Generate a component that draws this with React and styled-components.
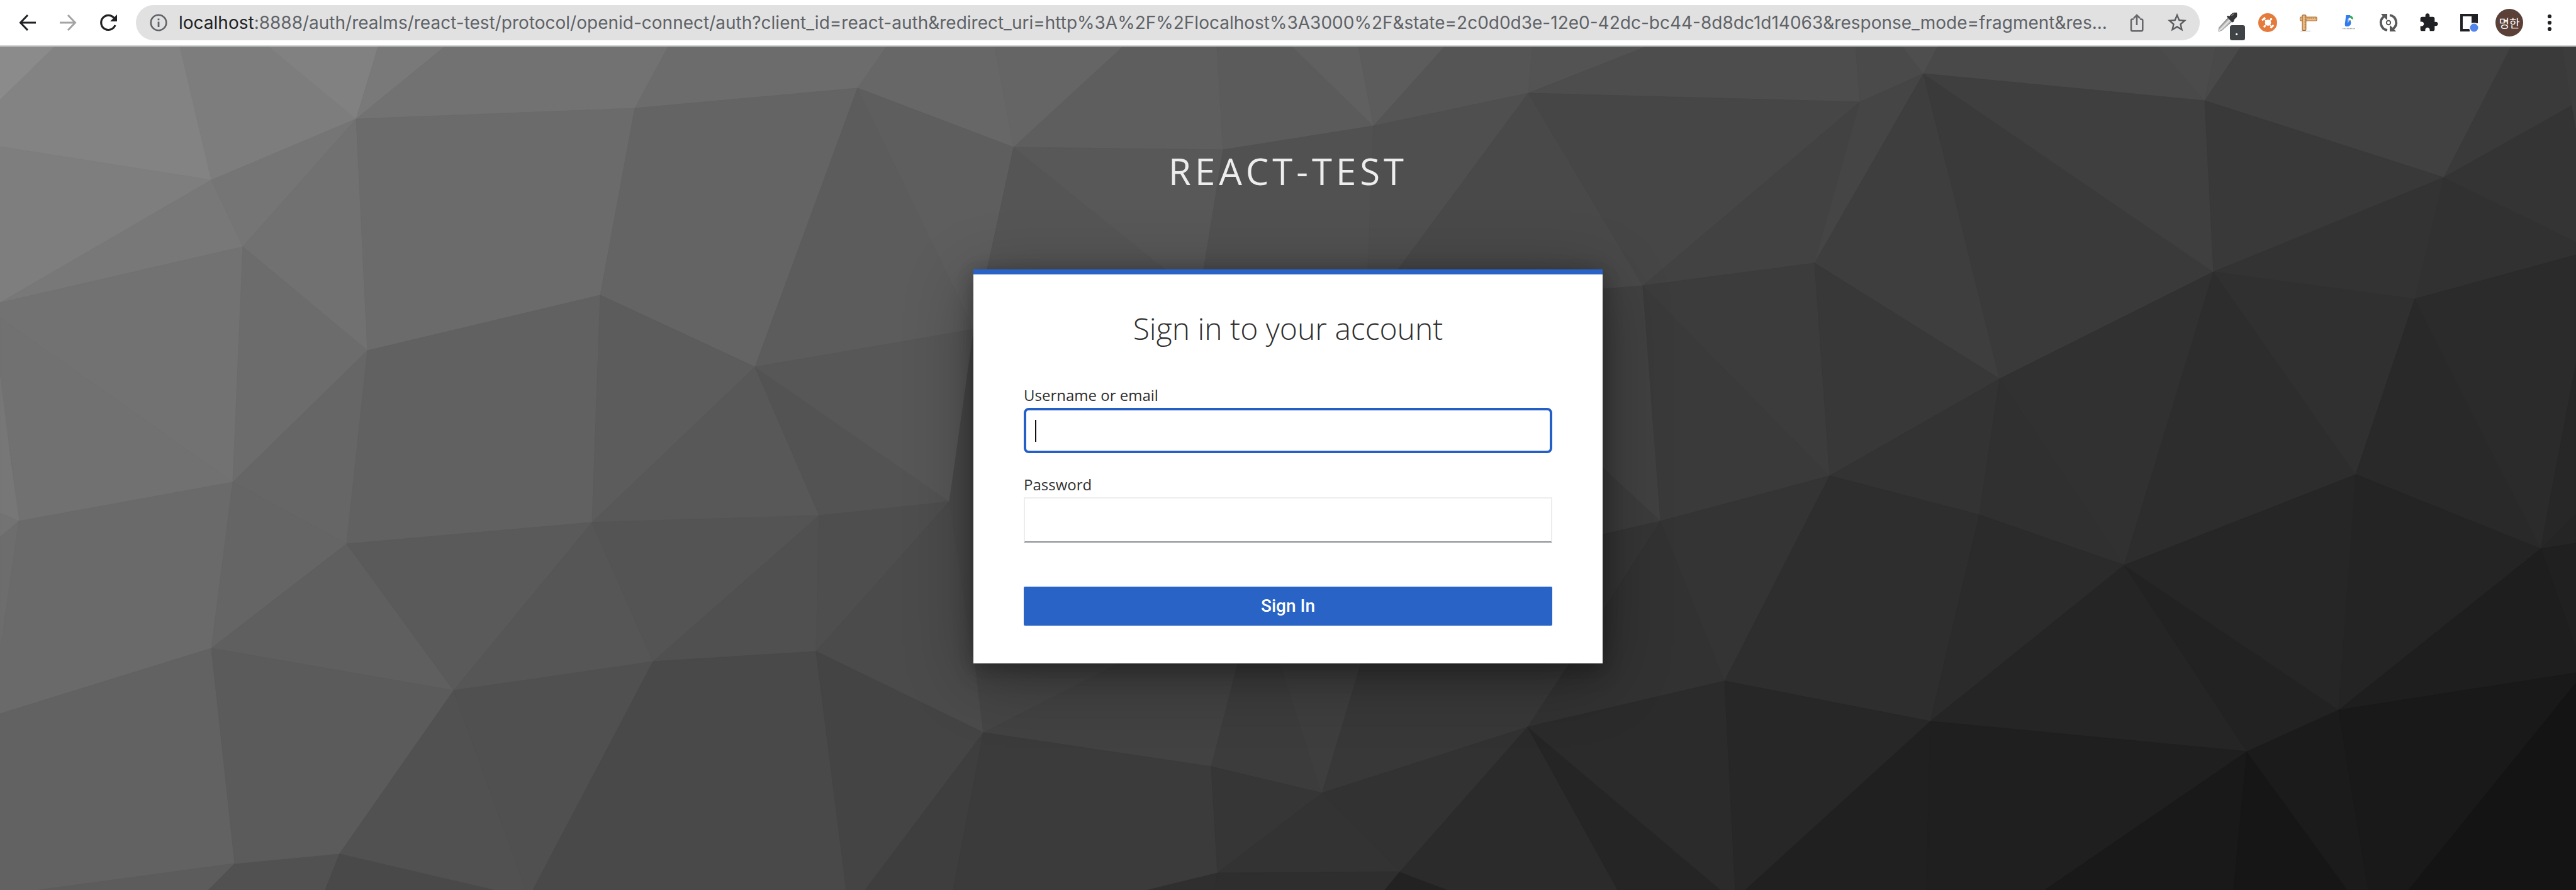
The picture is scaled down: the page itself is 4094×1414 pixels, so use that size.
import React from "react";
import styled, { createGlobalStyle } from "styled-components";

const GlobalStyle = createGlobalStyle`
  *, *::before, *::after { box-sizing: border-box; }
  body {
    margin: 0;
    background: #4b4b4b;
    font-family: "Open Sans", "Noto Sans", sans-serif;
  }
`;

/* Low-poly backdrop: each facet is a grey fill and its corner points. */
const FACETS = [
  ["#8b8b8b", "0,74 87,74 0,159"],
  ["#838383", "87,74 286,74 336,286 0,233 0,159"],
  ["#7d7d7d", "286,74 427,74 566,189 336,286"],
  ["#818181", "427,74 601,74 566,189"],
  ["#797979", "601,74 707,74 566,189"],
  ["#727272", "707,74 1062,74 1009,172 566,189"],
  ["#6c6c6c", "1062,74 1409,74 1363,140 1009,172"],
  ["#676767", "1409,74 1581,74 1611,234 1363,140"],
  ["#656565", "1581,74 1785,74 1611,234"],
  ["#5e5e5e", "1785,74 1934,74 1944,238 1611,234"],
  ["#5b5b5b", "1934,74 2054,74 2183,200 1944,238"],
  ["#606060", "2054,74 2159,74 2183,200"],
  ["#5c5c5c", "2159,74 2296,74 2183,200"],
  ["#555555", "2296,74 2436,74 2429,148 2183,200"],
  ["#535353", "2436,74 2617,74 2429,148"],
  ["#4d4d4d", "2617,74 2949,74 2956,162 2730,156 2429,148"],
  ["#4a4a4a", "2949,74 3024,74 3057,117 2956,162"],
  ["#4e4e4e", "3024,74 3080,74 3057,117"],
  ["#494949", "3080,74 3430,74 3504,160 3057,117"],
  ["#4b4b4b", "3430,74 3522,74 3504,160"],
  ["#494949", "3522,74 3562,74 3504,160"],
  ["#414141", "3562,74 3991,74 3884,282 3504,160"],
  ["#3a3a3a", "3991,74 4072,74 4087,168 3884,282"],
  ["#3c3c3c", "4072,74 4094,74 4094,211 4087,168"],

  ["#7e7e7e", "0,233 336,286 0,481"],
  ["#787878", "336,286 386,392 0,481"],
  ["#757575", "336,286 566,189 386,392"],
  ["#717171", "566,189 584,557 386,392"],
  ["#6b6b6b", "566,189 1009,172 954,469 584,557"],
  ["#646464", "1009,172 1363,140 1200,583 954,469"],
  ["#5c5c5c", "1363,140 1548,523 1200,583"],
  ["#5e5e5e", "1363,140 1611,234 1569,428 1548,523"],
  ["#555555", "1611,234 1852,428 1569,428"],
  ["#585858", "1611,234 1944,238 1913,428 1852,428"],
  ["#515151", "1944,238 2183,200 2174,428 1913,428"],
  ["#4f4f4f", "2183,200 2429,148 2222,428 2174,428"],
  ["#494949", "2429,148 2611,454 2548,463 2222,463 2222,428"],
  ["#464646", "2429,148 2956,162 2611,454"],
  ["#424242", "2956,162 2884,418 2611,454"],
  ["#454545", "2956,162 3057,117 2884,418"],
  ["#3e3e3e", "3057,117 3178,602 2884,418"],
  ["#3a3a3a", "3057,117 3518,432 3178,602"],
  ["#3f3f3f", "3057,117 3504,160 3518,432"],
  ["#393939", "3504,160 3884,282 3518,432"],
  ["#333333", "3884,282 3838,475 3518,432"],
  ["#313131", "3884,282 4094,384 4094,405 3838,475"],
  ["#343434", "3884,282 4087,168 4094,211 4094,384"],

  ["#727272", "0,481 386,392 370,766 0,505"],
  ["#717171", "0,505 370,766 30,828 19,737 0,600"],
  ["#777777", "0,600 30,828 0,815"],
  ["#737373", "0,815 30,828 0,853"],
  ["#6d6d6d", "0,853 30,828 0,1035"],
  ["#6c6c6c", "386,392 584,557 370,766"],
  ["#666666", "584,557 551,864 370,766"],
  ["#616161", "584,557 954,469 941,830 551,864"],
  ["#5c5c5c", "954,469 1200,583 941,830"],
  ["#585858", "1200,583 1302,819 941,830"],
  ["#535353", "1200,583 1509,797 1302,819"],
  ["#575757", "1200,583 1548,523 1509,797"],
  ["#494949", "1548,523 1600,523 1600,1054 1548,1054 1509,797"],
  ["#414141", "2500,463 2611,454 2639,828 2500,700"],
  ["#3c3c3c", "2500,700 2639,828 2500,860"],
  ["#3a3a3a", "2611,454 2908,756 2639,828"],
  ["#3c3c3c", "2611,454 2884,418 2908,756"],
  ["#383838", "2884,418 3178,602 2908,756"],
  ["#333333", "3178,602 3146,818 2908,756"],
  ["#303030", "3178,602 3376,898 3146,818"],
  ["#313131", "3178,602 3518,432 3376,898"],
  ["#2d2d2d", "3518,432 3744,754 3376,898"],
  ["#303030", "3518,432 3838,475 3744,754"],
  ["#292929", "3838,475 4038,872 3744,754"],
  ["#2b2b2b", "3838,475 4094,405 4094,578 4038,872"],
  ["#272727", "4094,578 4094,817 4038,872"],
  ["#252525", "4094,817 4094,863 4038,872"],
  ["#202020", "4094,863 4094,1031 4038,872"],

  ["#6a6a6a", "30,828 370,766 336,1030 0,1134 0,1035"],
  ["#656565", "370,766 551,864 336,1030"],
  ["#5f5f5f", "551,864 721,1097 336,1030"],
  ["#5a5a5a", "551,864 941,830 721,1097"],
  ["#565656", "941,830 1038,1051 721,1097"],
  ["#545454", "941,830 1302,819 1038,1051"],
  ["#505050", "1302,819 1297,1035 1038,1051"],
  ["#4e4e4e", "1302,819 1509,797 1297,1035"],
  ["#4b4b4b", "1509,797 1563,1164 1297,1035"],
  ["#454545", "1548,1040 1778,1054 1563,1164"],
  ["#424242", "1778,1054 1967,1054 1925,1218 1563,1164"],
  ["#3c3c3c", "1967,1054 2035,1054 2101,1260 1925,1218"],
  ["#3e3e3e", "2035,1054 2163,1054 2101,1260"],
  ["#383838", "2163,1054 2163,1000 2500,1000 2494,1054 2428,1155 2101,1260"],
  ["#353535", "2500,860 2639,828 2500,1054"],
  ["#323232", "2639,828 2741,1082 2428,1155 2500,1045"],
  ["#343434", "2639,828 2908,756 2741,1082"],
  ["#2e2e2e", "2908,756 3146,818 3068,1146 2741,1082"],
  ["#2b2b2b", "3146,818 3376,898 3068,1146"],
  ["#252525", "3376,898 3571,1194 3068,1146"],
  ["#222222", "3376,898 3717,1128 3571,1194"],
  ["#262626", "3376,898 3744,754 3717,1128"],
  ["#242424", "3744,754 4038,872 3717,1128"],
  ["#1e1e1e", "4038,872 4094,1031 4094,1069 3717,1128"],

  ["#626262", "0,1134 336,1030 373,1372 61,1414 0,1414"],
  ["#5c5c5c", "61,1414 373,1372 331,1414"],
  ["#515151", "331,1414 373,1372 540,1356 517,1414"],
  ["#5b5b5b", "336,1030 721,1097 540,1356 373,1372"],
  ["#494949", "517,1414 540,1356 788,1414"],
  ["#515151", "721,1097 836,1414 788,1414 540,1356"],
  ["#505050", "721,1097 1038,1051 847,1414 836,1414"],
  ["#494949", "1038,1051 1297,1035 1345,1414 847,1414"],
  ["#444444", "1297,1035 1563,1164 1375,1414 1345,1414"],
  ["#3e3e3e", "1563,1164 1515,1414 1375,1414"],
  ["#3b3b3b", "1563,1164 1925,1218 1935,1387 1825,1414 1515,1414"],
  ["#2f2f2f", "1825,1414 1935,1387 1931,1414"],
  ["#363636", "1925,1218 2101,1260 1935,1387"],
  ["#333333", "2101,1260 2225,1385 1935,1387"],
  ["#2e2e2e", "1935,1387 2225,1385 2201,1414 1931,1414"],
  ["#323232", "2101,1260 2428,1155 2225,1385"],
  ["#222222", "2225,1385 2301,1414 2201,1414"],
  ["#2b2b2b", "2428,1155 2571,1414 2301,1414 2225,1385"],
  ["#252525", "2428,1155 2735,1414 2571,1414"],
  ["#2b2b2b", "2428,1155 2741,1082 2758,1414 2735,1414"],
  ["#272727", "2741,1082 3068,1146 2774,1414 2758,1414"],
  ["#202020", "3068,1146 3062,1414 2774,1414"],
  ["#1f1f1f", "3068,1146 3571,1194 3250,1414 3062,1414"],
  ["#191919", "3571,1194 3550,1414 3250,1414"],
  ["#161616", "3571,1194 3731,1414 3550,1414"],
  ["#1b1b1b", "3571,1194 3717,1128 3764,1414 3731,1414"],
  ["#191919", "3717,1128 4094,1069 4094,1085 3828,1414 3764,1414"],
  ["#141414", "4094,1085 4094,1414 3828,1414"],
];

const Page = styled.div`
  display: flex;
  flex-direction: column;
  min-height: 100vh;
`;

const Toolbar = styled.header`
  display: flex;
  align-items: center;
  gap: 12px;
  padding: 8px 10px 8px 12px;
  background: #ffffff;
  border-bottom: 2px solid #c9cbca;
`;

const ButtonGroup = styled.div`
  display: flex;
  align-items: center;
  flex: none;
`;

const IconButton = styled.button`
  display: flex;
  align-items: center;
  justify-content: center;
  width: 64px;
  height: 56px;
  padding: 0;
  border: 0;
  background: transparent;
  color: ${(p) => p.$color || "#202124"};
`;

const Icon = styled.svg`
  display: block;
  flex: none;
  width: ${(p) => p.$size || 32}px;
  height: ${(p) => p.$size || 32}px;
  overflow: visible;
`;

const AddressBar = styled.div`
  display: flex;
  align-items: center;
  flex: 1;
  min-width: 0;
  height: 56px;
  padding: 0 4px 0 20px;
  border-radius: 28px;
  background: #e1e1e1;
  color: #5f6368;
`;

const Address = styled.div`
  flex: 1;
  min-width: 0;
  margin-left: 16px;
  overflow: hidden;
  white-space: nowrap;
  font-family: Inter, Roboto, sans-serif;
  font-size: 28px;
  line-height: 40px;
`;

const Host = styled.span`
  color: #202124;
`;

const Avatar = styled.span`
  display: flex;
  align-items: center;
  justify-content: center;
  width: 44px;
  height: 44px;
  border-radius: 50%;
  background: #5b4038;
  color: #ffffff;
  font-family: "Noto Sans CJK KR", sans-serif;
  font-size: 18px;
  line-height: 24px;
`;

const Main = styled.main`
  position: relative;
  display: flex;
  flex-direction: column;
  align-items: center;
  flex: 1;
  padding: 158px 40px;
  overflow: hidden;
`;

const Backdrop = styled.svg`
  position: absolute;
  inset: 0;
  width: 100%;
  height: 100%;
`;

const Realm = styled.h1`
  position: relative;
  margin: 0 0 116px;
  color: #ededed;
  font-size: 58px;
  font-weight: 400;
  line-height: 80px;
  letter-spacing: 6px;
  text-transform: uppercase;
`;

const Card = styled.section`
  position: relative;
  width: 100%;
  max-width: 1000px;
  padding: 54px 80px 60px;
  border-top: 8px solid #2863c5;
  background: #ffffff;
  box-shadow: 0 16px 32px rgba(3, 3, 3, 0.16), 0 0 24px rgba(3, 3, 3, 0.16),
    0 20px 100px rgba(3, 3, 3, 0.32);
`;

const Title = styled.h2`
  margin: 0 0 56px;
  color: #303030;
  font-size: 48px;
  font-weight: 300;
  line-height: 64px;
  text-align: center;
`;

const Form = styled.form`
  display: flex;
  flex-direction: column;
  gap: 32px;
`;

const Field = styled.div`
  display: flex;
  flex-direction: column;
  gap: 2px;
`;

const Label = styled.label`
  color: #303030;
  font-size: 24px;
  line-height: 36px;
`;

const InputWrap = styled.div`
  position: relative;
  display: flex;
`;

const Input = styled.input`
  width: 100%;
  height: 72px;
  padding: 0 16px;
  border: 2px solid #ededed;
  border-bottom-color: #8b8d8f;
  border-radius: 0;
  outline: 0;
  background: #ffffff;
  color: #363636;
  font: inherit;
  font-size: 24px;

  ${(p) =>
    p.$active &&
    `
    border: 4px solid #245fc8;
    border-radius: 8px;
  `}
`;

const Caret = styled.span`
  position: absolute;
  top: 19px;
  left: 18px;
  width: 2px;
  height: 35px;
  background: #111111;
`;

const Submit = styled.button`
  height: 62px;
  margin-top: 38px;
  padding: 0;
  border: 0;
  border-radius: 2px;
  background: #2863c5;
  color: #ffffff;
  font-family: Roboto, "Open Sans", sans-serif;
  font-size: 28px;
  font-weight: 500;
  line-height: 40px;
`;

const BackIcon = () => (
  <Icon viewBox="0 0 32 32" fill="none" stroke="currentColor" strokeWidth="3">
    <path d="M29 16H5M16 4 4.500 16 16 28" />
  </Icon>
);

const ForwardIcon = () => (
  <Icon viewBox="0 0 32 32" fill="none" stroke="currentColor" strokeWidth="3">
    <path d="M3 16H27M16 4 27.500 16 16 28" />
  </Icon>
);

const ReloadIcon = () => (
  <Icon viewBox="0 0 32 32">
    <path d="M25 8.500A11.500 11.500 0 1 0 27 20" fill="none" stroke="currentColor" strokeWidth="3.200" />
    <path d="M30 3V14H19Z" fill="currentColor" />
  </Icon>
);

const InfoIcon = () => (
  <Icon viewBox="0 0 32 32">
    <circle cx="16" cy="16" r="12.300" fill="none" stroke="currentColor" strokeWidth="2.600" />
    <path d="M14.600 14.500h2.800v8.500h-2.800zM14.600 9.500h2.800v2.800h-2.800z" fill="currentColor" />
  </Icon>
);

const ShareIcon = () => (
  <Icon viewBox="0 0 32 32" fill="none" stroke="currentColor" strokeWidth="2.600">
    <path d="M11 10.500H9Q7 10.500 7 12.500V27Q7 29.300 9 29.300H23Q25.300 29.300 25.300 27V12.500Q25.300 10.500 23 10.500H21" />
    <path d="M16 20V4.500M11 9 16 4 21 9" />
  </Icon>
);

const StarIcon = () => (
  <Icon $size={36} viewBox="0 0 24 24" fill="currentColor">
    <path d="M22 9.240l-7.190-.620L12 2 9.190 8.630 2 9.240l5.460 4.730L5.820 21 12 17.270 18.180 21l-1.630-7.030L22 9.240zM12 15.400l-3.760 2.270 1-4.280-3.320-2.880 4.380-.380L12 6.100l1.710 4.040 4.380.380-3.320 2.880 1 4.280L12 15.400z" />
  </Icon>
);

const DropperIcon = () => (
  <Icon viewBox="0 0 32 32">
    <defs>
      <linearGradient id="glass" x1="0" y1="0" x2="1" y2="1">
        <stop offset="0.350" stopColor="#7d7d7d" />
        <stop offset="0.500" stopColor="#e8e8e8" />
        <stop offset="0.650" stopColor="#8a8a8a" />
      </linearGradient>
    </defs>
    <path d="M16.500 8.500 23 14.500 7.500 28 2 30 2.500 24Z" fill="url(#glass)" stroke="#8c8c8c" strokeWidth="0.800" />
    <path d="M15 6.500Q16 4 19 6L21.500 3Q24 0 27 0H31Q32 3 31 7L27 11Q26 16 23.500 15.500Z" fill="#343536" />
    <path d="M23 4.500 26 2" stroke="#8b8b8b" strokeWidth="1.500" strokeLinecap="round" />
    <rect x="20" y="20" width="24" height="24" rx="3.500" fill="#3f4346" />
    <circle cx="30.600" cy="34.300" r="1.600" fill="#ffffff" />
  </Icon>
);

const HubIcon = () => (
  <Icon viewBox="0 0 32 32">
    <circle cx="16" cy="16" r="15" fill="#e57a3d" />
    <g fill="none" stroke="#ffffff">
      <path d="M10 10 22.500 22.500M21.500 11 11 21.500" strokeWidth="1.300" />
      <path d="M7 12.300 12 8M20.500 24.300 25.300 20" strokeWidth="3" />
    </g>
    <circle cx="16.500" cy="16" r="4.800" fill="#ffffff" />
    <circle cx="21.500" cy="10.500" r="1.800" fill="#ffffff" />
    <circle cx="11" cy="22" r="1.800" fill="#ffffff" />
  </Icon>
);

const RulerIcon = () => (
  <Icon viewBox="0 0 32 32">
    <path d="M4 29.500H20" stroke="#d6d6d6" strokeWidth="1.500" />
    <rect x="3.500" y="7" width="26.500" height="6" rx="1" fill="#e8bb82" stroke="#b0733a" strokeWidth="1.200" />
    <rect x="7" y="3.800" width="5.800" height="24.500" rx="1" fill="#e8bb82" stroke="#a0642f" strokeWidth="1.200" />
    <path
      d="M16 7v3M19 7v3M22 7v3M25 7v3M28 7v3M10.500 7H13M10.500 11H13M10.500 15H13M10.500 19H13M10.500 23H13"
      stroke="#b0733a"
      strokeWidth="0.900"
    />
  </Icon>
);

const BirdIcon = () => (
  <Icon viewBox="0 0 32 32">
    <path d="M12.500 4H19L20 14Q22 19 16 22H12Q10 20 11 16Z" fill="#2f7cf0" />
    <path d="M18 4.500Q24 5 24 11L19 9Z" fill="#35a853" />
    <circle cx="18.500" cy="10.500" r="2.300" fill="#ffffff" />
    <path d="M15 9 18 13 15 17Z" fill="#9fc4fb" />
    <path d="M18 11.500 21 13H18Z" fill="#f6a623" />
    <path d="M7 25.500H27" stroke="#9a9a9a" strokeWidth="1.600" strokeDasharray="1.500 0.800" />
  </Icon>
);

const SyncIcon = () => (
  <Icon viewBox="0 0 32 32">
    <g fill="none" stroke="#58595a" strokeWidth="3.800">
      <path d="M8.500 6.500A12 12 0 0 0 14 27.900" />
      <path d="M23.500 25.500A12 12 0 0 0 18 4.100" />
    </g>
    <path d="M4 2H14V12L10.500 9Q8 7 4 2ZM28 30H18V20L21.500 23Q24 25 28 30Z" fill="#58595a" />
    <circle cx="16" cy="16" r="3.200" fill="none" stroke="#58595a" strokeWidth="2" />
  </Icon>
);

const PuzzleIcon = () => (
  <Icon viewBox="0 0 24 24" fill="currentColor">
    <path d="M20.500 11H19V7c0-1.100-.900-2-2-2h-4V3.500C13 2.120 11.880 1 10.500 1S8 2.120 8 3.500V5H4c-1.100 0-1.990.900-1.990 2v3.800H3.500c1.490 0 2.700 1.210 2.700 2.700s-1.210 2.700-2.700 2.700H2V20c0 1.100.900 2 2 2h3.800v-1.500c0-1.490 1.210-2.700 2.700-2.700 1.490 0 2.700 1.210 2.700 2.700V22H17c1.100 0 2-.900 2-2v-4h1.500c1.380 0 2.500-1.120 2.500-2.500S21.880 11 20.500 11z" />
  </Icon>
);

const PanelIcon = () => (
  <Icon viewBox="0 0 32 32">
    <path d="M2 2H30V30H2ZM6 6V26H20V6Z" fill="currentColor" fillRule="evenodd" />
    <path d="M20 17H31V31H17V26H20Z" fill="#ffffff" />
    <circle cx="24" cy="24" r="8" fill="#ffffff" />
    <circle cx="24" cy="24" r="6.500" fill="#5185ec" />
  </Icon>
);

const MenuIcon = () => (
  <Icon viewBox="0 0 32 32" fill="currentColor">
    <circle cx="16" cy="6" r="3.100" />
    <circle cx="16" cy="16" r="3.100" />
    <circle cx="16" cy="26" r="3.100" />
  </Icon>
);

const EXTENSIONS = [
  ["Color picker", DropperIcon],
  ["Hub", HubIcon],
  ["Page ruler", RulerIcon],
  ["Helper", BirdIcon],
  ["Sync", SyncIcon],
  ["Extensions", PuzzleIcon],
  ["Side panel", PanelIcon],
];

function BrowserToolbar() {
  return (
    <Toolbar>
      <ButtonGroup>
        <IconButton aria-label="Back">
          <BackIcon />
        </IconButton>
        <IconButton aria-label="Forward" $color="#a3a4a5">
          <ForwardIcon />
        </IconButton>
        <IconButton aria-label="Reload">
          <ReloadIcon />
        </IconButton>
      </ButtonGroup>
      <AddressBar>
        <InfoIcon />
        <Address>
          <Host>localhost</Host>
          :8888/auth/realms/react-test/protocol/openid-connect/auth?client_id=react-auth&amp;redirect_uri=http%3A%2F%2Flocalhost%3A3000%2F&amp;state=2c0d0d3e-12e0-42dc-bc44-8d8dc1d14063&amp;response_mode=fragment&amp;res...
        </Address>
        <IconButton aria-label="Share" $color="#66686b">
          <ShareIcon />
        </IconButton>
        <IconButton aria-label="Bookmark" $color="#5a5c5f">
          <StarIcon />
        </IconButton>
      </AddressBar>
      <ButtonGroup>
        {EXTENSIONS.map(([name, Glyph]) => (
          <IconButton key={name} aria-label={name}>
            <Glyph />
          </IconButton>
        ))}
        <IconButton>
          <Avatar>명한</Avatar>
        </IconButton>
        <IconButton aria-label="Menu">
          <MenuIcon />
        </IconButton>
      </ButtonGroup>
    </Toolbar>
  );
}

export default function App() {
  return (
    <Page>
      <GlobalStyle />
      <BrowserToolbar />
      <Main>
        <Backdrop viewBox="0 74 4094 1340" preserveAspectRatio="xMidYMid slice" aria-hidden="true">
          {FACETS.map(([fill, points]) => (
            <polygon key={points} points={points} fill={fill} stroke={fill} strokeWidth="1" />
          ))}
        </Backdrop>
        <Realm>react-test</Realm>
        <Card>
          <Title>Sign in to your account</Title>
          <Form onSubmit={(e) => e.preventDefault()}>
            <Field>
              <Label htmlFor="username">Username or email</Label>
              <InputWrap>
                <Input id="username" type="text" $active />
                <Caret />
              </InputWrap>
            </Field>
            <Field>
              <Label htmlFor="password">Password</Label>
              <Input id="password" type="password" />
            </Field>
            <Submit type="submit">Sign In</Submit>
          </Form>
        </Card>
      </Main>
    </Page>
  );
}
